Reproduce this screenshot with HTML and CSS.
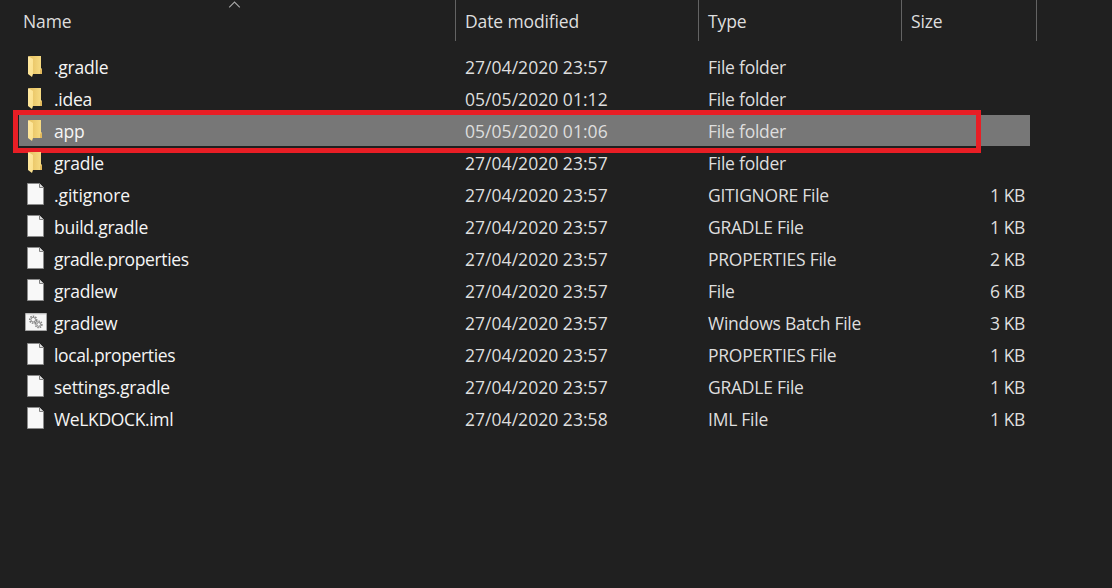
FILE: index.html
```html
<!DOCTYPE html>
<html lang="en">
<head>
<meta charset="utf-8">
<title>File list</title>
<link rel="stylesheet" href="styles.css">
</head>
<body>
<svg class="defs" aria-hidden="true">
  <defs>
    <linearGradient id="front" x1="0" x2="1" y1="0" y2="1"><stop offset="0" stop-color="#ffe9a3"/><stop offset="1" stop-color="#fbe08a"/></linearGradient>
    <linearGradient id="back" x1="0" x2="1" y1="0" y2="0"><stop offset="0" stop-color="#e6c060"/><stop offset="1" stop-color="#f8dd85"/></linearGradient>
  </defs>
  <symbol id="folder" viewBox="0 0 24 24">
    <path d="M4 1h12v12l1 1v5H6z" fill="url(#back)"/>
    <path d="M16 14h1v5h-2v-4z" fill="#e2b95c"/>
    <path d="M3 1l5 3v15l-1 3-4-3z" fill="url(#front)"/>
  </symbol>
  <symbol id="page" viewBox="0 0 24 24">
    <path d="M2.5.5h12l4 4v17h-16z" fill="#f8f8f8" stroke="#8b8b8b"/>
    <path d="M14.5.5v4h4" fill="#dedede" stroke="#808080"/>
  </symbol>
  <symbol id="batch" viewBox="0 0 24 24">
    <path d="M.5 2.5h21v17H.5z" fill="#f6f6f6" stroke="#a5a5a5"/>
    <path d="M1 3h20" stroke="#d0d0d0"/>
    <g fill="none" stroke="#858585">
      <circle cx="8.2" cy="8.7" r="3.5" stroke-width="1.5" stroke-dasharray="1.6 1"/>
      <circle cx="8.2" cy="8.7" r="2.3"/>
      <circle cx="13.7" cy="13.4" r="3.2" stroke-width="1.5" stroke-dasharray="1.5 .9"/>
      <circle cx="13.7" cy="13.4" r="1.9"/>
    </g>
  </symbol>
</svg>
<div class="explorer">
  <div class="header">
    <div class="head head-name">Name
      <svg class="sort" viewBox="0 0 12 7"><path d="M.7 6.3L6 1l5.3 5.3" fill="none" stroke="#a8a8a8" stroke-width="1.1"/></svg>
    </div>
    <div class="head head-date">Date modified</div>
    <div class="head">Type</div>
    <div class="head">Size</div>
  </div>
  <div class="list">
    <div class="row"><svg class="icon"><use href="#folder"/></svg><span class="name">.gradle</span><span class="date">27/04/2020 23:57</span><span class="type">File folder</span><span class="size"></span></div>
    <div class="row"><svg class="icon"><use href="#folder"/></svg><span class="name">.idea</span><span class="date">05/05/2020 01:12</span><span class="type">File folder</span><span class="size"></span></div>
    <div class="row selected"><svg class="icon"><use href="#folder"/></svg><span class="name">app</span><span class="date">05/05/2020 01:06</span><span class="type">File folder</span><span class="size"></span><div class="marker"></div></div>
    <div class="row"><svg class="icon"><use href="#folder"/></svg><span class="name">gradle</span><span class="date">27/04/2020 23:57</span><span class="type">File folder</span><span class="size"></span></div>
    <div class="row"><svg class="icon"><use href="#page"/></svg><span class="name loose">.gitignore</span><span class="date">27/04/2020 23:57</span><span class="type">GITIGNORE File</span><span class="size">1 KB</span></div>
    <div class="row"><svg class="icon"><use href="#page"/></svg><span class="name">build.gradle</span><span class="date">27/04/2020 23:57</span><span class="type">GRADLE File</span><span class="size">1 KB</span></div>
    <div class="row"><svg class="icon"><use href="#page"/></svg><span class="name tight">gradle.properties</span><span class="date">27/04/2020 23:57</span><span class="type">PROPERTIES File</span><span class="size">2 KB</span></div>
    <div class="row"><svg class="icon"><use href="#page"/></svg><span class="name">gradlew</span><span class="date">27/04/2020 23:57</span><span class="type">File</span><span class="size">6 KB</span></div>
    <div class="row"><svg class="icon"><use href="#batch"/></svg><span class="name">gradlew</span><span class="date">27/04/2020 23:57</span><span class="type">Windows Batch File</span><span class="size">3 KB</span></div>
    <div class="row"><svg class="icon"><use href="#page"/></svg><span class="name tight">local.properties</span><span class="date">27/04/2020 23:57</span><span class="type">PROPERTIES File</span><span class="size">1 KB</span></div>
    <div class="row"><svg class="icon"><use href="#page"/></svg><span class="name">settings.gradle</span><span class="date">27/04/2020 23:57</span><span class="type">GRADLE File</span><span class="size">1 KB</span></div>
    <div class="row"><svg class="icon"><use href="#page"/></svg><span class="name tight">WeLKDOCK.iml</span><span class="date">27/04/2020 23:58</span><span class="type">IML File</span><span class="size">1 KB</span></div>
  </div>
</div>
</body>
</html>
```
FILE: styles.css
```css
* { box-sizing: border-box; }
body {
  margin: 0;
  background: #202020;
  color: #dedede;
  font-family: "Segoe UI", "Open Sans", "Noto Sans", sans-serif;
  font-size: 17.5px;
  overflow: hidden;
}
.defs { position: absolute; width: 0; height: 0; }
.explorer { height: 588px; }
.header {
  display: grid;
  grid-template-columns: 456px 243px 203px 135px;
  height: 41px;
}
.head {
  position: relative;
  height: 41px;
  padding-left: 9px;
  border-right: 1px solid #636363;
  line-height: 43px;
  white-space: nowrap;
  letter-spacing: -0.12px;
}
.head-name { padding-left: 23px; }
.sort { position: absolute; left: 228px; top: 1px; width: 13px; height: 7px; }
.list { padding: 10px 0 0 19px; }
.row {
  position: relative;
  display: grid;
  grid-template-columns: 35px 411px 243px 203px 114px;
  width: 1011px;
  height: 32px;
  line-height: 33px;
  white-space: nowrap;
}
.icon { width: 24px; height: 24px; margin: 4px 0 0 6px; }
.name { color: #f5f5f5; letter-spacing: -0.24px; }
.tight { letter-spacing: -0.36px; }
.loose { letter-spacing: -0.08px; }
.date { letter-spacing: 0.04px; }
.type { letter-spacing: -0.25px; }
.size { text-align: right; letter-spacing: -0.4px; }
.selected {
  background: #777 content-box;
  padding-bottom: 1px;
}
.marker {
  position: absolute;
  left: -6px;
  top: -5px;
  width: 968px;
  height: 43px;
  border: 5px solid #e81e25;
}
```
